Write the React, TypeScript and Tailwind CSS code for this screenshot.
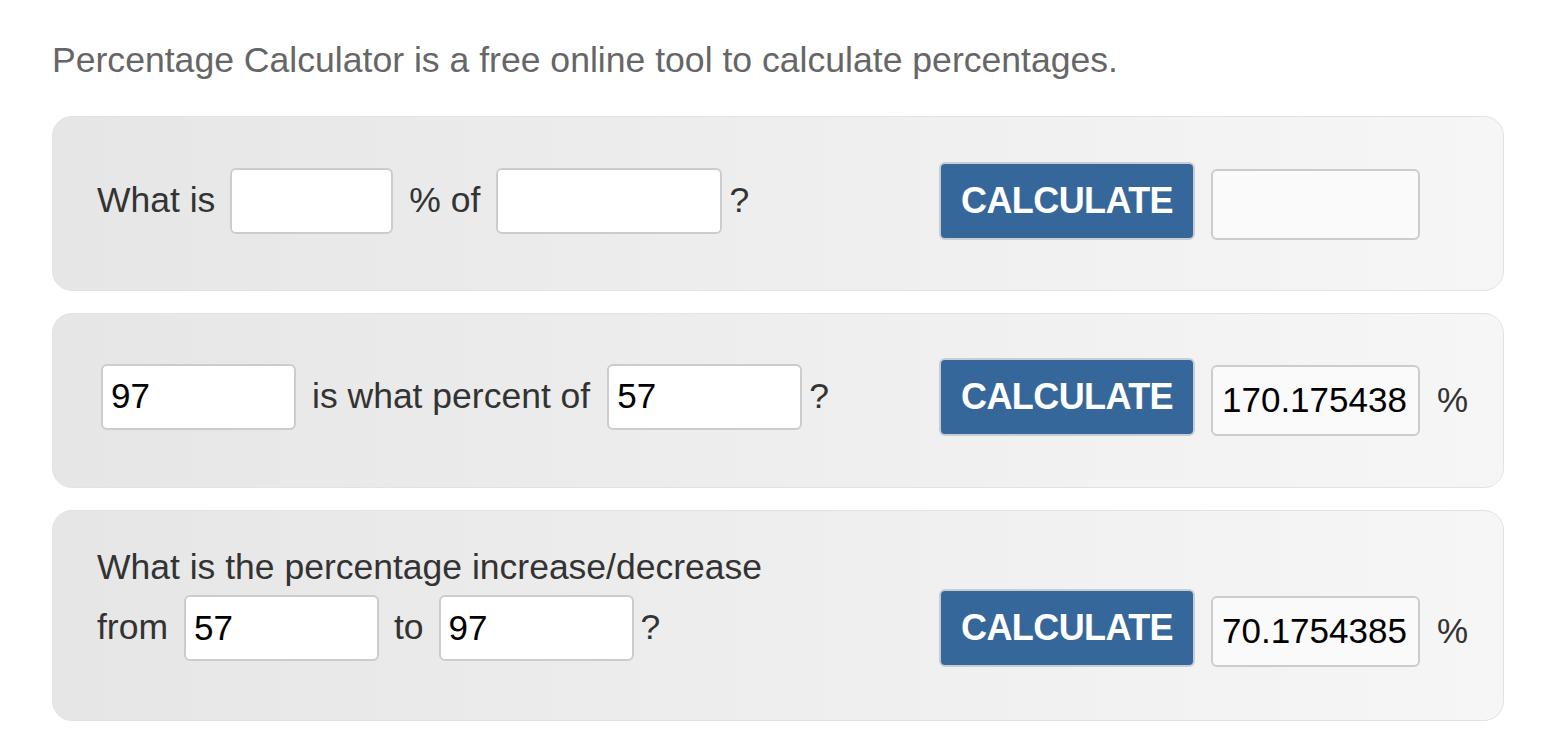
import React from "react";

const font = { fontFamily: '"Liberation Sans", Arial, Helvetica, sans-serif' };

function Field({ value, w }: { value?: string; w: string }) {
  return (
    <div
      className={`${w} h-[66px] bg-white border-2 border-[#cccccc] rounded-[6px] flex items-center px-[8px] text-[35px] text-black`}
    >
      {value}
    </div>
  );
}

function Right({ value, pct }: { value?: string; pct?: boolean }) {
  return (
    <div className="flex items-end">
      <div className="w-[256px] h-[78px] bg-[#35679a] border-2 border-[#c9cdd3] rounded-[6px] flex items-center justify-center text-white font-bold text-[36px] tracking-[-0.6px]">
        CALCULATE
      </div>
      <div className="ml-[16px] w-[209px] h-[71px] bg-[#fafafa] border-2 border-[#cccccc] rounded-[6px] flex items-center px-[9px] text-[35px] text-black overflow-hidden whitespace-nowrap">
        {value}
      </div>
      {pct && (
        <div className="ml-[17px] h-[71px] flex items-center text-[35px] text-[#333]">%</div>
      )}
    </div>
  );
}

const panel =
  "mx-[52px] rounded-[20px] border border-[#e2e2e2] bg-gradient-to-r from-[#e6e6e6] via-[#eeeeee] to-[#f6f6f6]";

export default function App() {
  return (
    <div className="w-[1556px] h-[746px] bg-white overflow-hidden" style={font}>
      <div className="pt-[39px] pl-[52px] text-[35.6px] leading-[42px] text-[#666666] whitespace-nowrap">
        Percentage Calculator is a free online tool to calculate percentages.
      </div>

      <div className={`${panel} mt-[35px] h-[175px] pb-[6px] flex items-center pl-[44px] text-[35.5px] text-[#333333]`}>
        <div className="w-[842px] flex items-center">
          <span>What is</span>
          <div className="ml-[15px]"><Field w="w-[163px]" /></div>
          <span className="ml-[16px]">% of</span>
          <div className="ml-[16px]"><Field w="w-[226px]" /></div>
          <span className="ml-[7px]">?</span>
        </div>
        <Right />
      </div>

      <div className={`${panel} mt-[22px] h-[175px] pb-[8px] flex items-center pl-[44px] text-[35.5px] text-[#333333]`}>
        <div className="w-[842px] flex items-center">
          <div className="ml-[4px]"><Field w="w-[195px]" value="97" /></div>
          <span className="ml-[16px]">is what percent of</span>
          <div className="ml-[17px]"><Field w="w-[195px]" value="57" /></div>
          <span className="ml-[7px]">?</span>
        </div>
        <Right value="170.175438" pct />
      </div>

      <div className={`${panel} mt-[22px] h-[211px] pl-[44px] pt-[36px] text-[35.5px] text-[#333333]`}>
        <div className="leading-[40px]">What is the percentage increase/decrease</div>
        <div className="mt-[2px] flex items-center">
          <div className="w-[842px] flex items-center">
            <span>from</span>
            <div className="ml-[16px]"><Field w="w-[195px]" value="57" /></div>
            <span className="ml-[15px]">to</span>
            <div className="ml-[15px]"><Field w="w-[195px]" value="97" /></div>
            <span className="ml-[7px]">?</span>
          </div>
          <Right value="70.1754385" pct />
        </div>
      </div>
    </div>
  );
}
